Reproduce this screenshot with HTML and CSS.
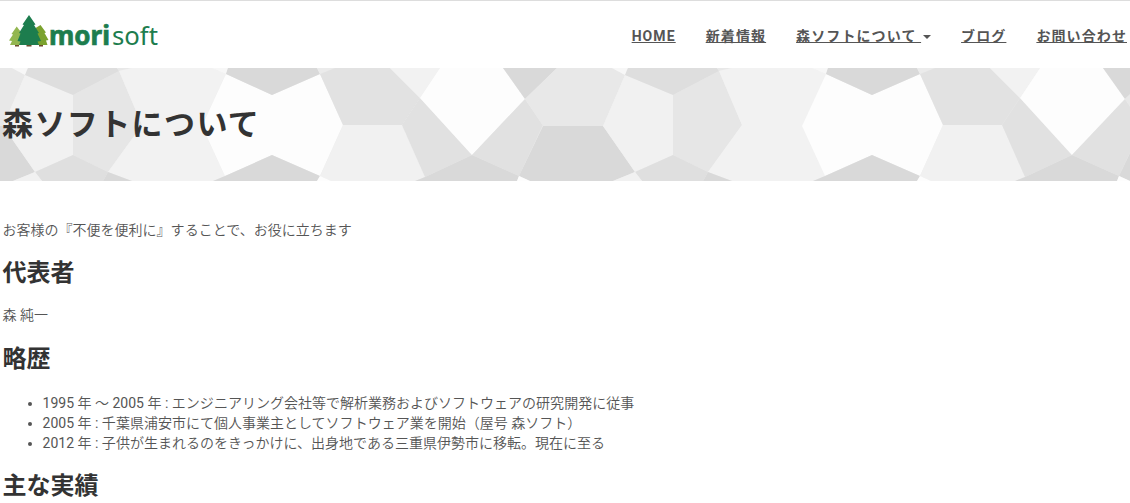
FILE: index.html
```html
<!DOCTYPE html>
<html lang="ja">
<head>
    <meta charset="UTF-8">
    <meta name="viewport" content="width=device-width, initial-scale=1.0">
    <title>森ソフトについて</title>
    <link rel="stylesheet" href="styles.css">
</head>
<body>
    <header class="header">
        <a href="#" class="logo">
            <svg width="156" height="46" viewBox="0 0 156 46" role="img" aria-label="morisoft">
                <path fill="#6b4a2b" d="M7 31h4v2.500H7zM18.500 31h5v2.500h-5zM31 31h4v2.500h-4z"/>
                <path fill="#93b650" d="M8.700 13.500L14 20.500 13 21 18 27V32H2L4 28 1 27.500 5 21.500 3.500 21z"/>
                <path fill="#7ba22e" d="M32.500 12L38 19.500 36.500 20 40.500 27 38 27.500 39.500 32H26V16z"/>
                <path fill="#1d7d4e" d="M21 2L27.500 11.500 26 12 31 20 29.500 20.500 33 28 29.500 28.500 31 32H11L12.500 28.500 9.500 28 12.500 20.500 11 20 16 12 14.500 11.500z"/>
                <text class="logo-bold" x="41" y="32" textLength="61" lengthAdjust="spacingAndGlyphs">mori</text>
                <text class="logo-thin" x="104" y="32" textLength="46" lengthAdjust="spacingAndGlyphs">soft</text>
            </svg>
        </a>
        <nav class="menu">
            <a href="#">HOME</a>
            <a href="#">新着情報</a>
            <a href="#">森ソフトについて <span class="caret"></span></a>
            <a href="#">ブログ</a>
            <a href="#">お問い合わせ</a>
        </nav>
    </header>

    <div class="banner">
        <svg class="banner-bg" width="1130" height="113" viewBox="0 0 1130 113" aria-hidden="true">
            <defs>
                <g id="tile">
                    <path fill="#f1f1f1" d="M3 58L25 7 73 27V87L35 104z"/>
                    <path fill="#e6e6e6" d="M73 27L119 3 142 57 108 104 73 87z"/>
                    <path fill="#dedede" d="M28 0L25 7 73 27 119 3 117 0z"/>
                    <path fill="#e8e8e8" d="M117 0L119 3 132 0z"/>
                    <path fill="#f2f2f2" d="M119 3L132 0H212L226 6 202 58 225 108 213 113H132L108 104 142 57z"/>
                    <path fill="#f7f7f7" d="M212 0H228L226 6z"/>
                    <path fill="#fdfdfd" d="M226 6L272 27 320 6 343 57 320 108 272 87 225 108 202 58z"/>
                    <path fill="#d9d9d9" d="M228 0L226 6 272 27 320 6 317 0z"/>
                    <path fill="#d9d9d9" d="M213 113L225 108 272 87 320 108 317 113z"/>
                    <path fill="#ebebeb" d="M317 0L320 6 335 0z"/>
                    <path fill="#e2e2e2" d="M320 6L335 0H390L420 30 402 57H343z"/>
                    <path fill="#f1f1f1" d="M343 57H402L425 109 415 113H331L320 108z"/>
                    <path fill="#e1e1e1" d="M402 57L420 30 472 87 425 109z"/>
                    <path fill="#f2f2f2" d="M390 0H440L420 30z"/>
                    <path fill="#fdfdfd" d="M440 0H503L525 31 472 87 420 30z"/>
                    <path fill="#d9d9d9" d="M503 0H557L525 31z"/>
                    <path fill="#e1e1e1" d="M525 31L543 57 519 108 472 87z"/>
                    <path fill="#e8e8e8" d="M525 31L557 0H612L625 7 603 58H543z"/>
                    <path fill="#f7f7f7" d="M612 0H628L625 7z"/>
                    <path fill="#d9d9d9" d="M543 58H603L635 104 613 113H530L519 108z"/>
                    <path fill="#d9d9d9" d="M415 113L425 109 472 87 519 108 517 113z"/>
                    <path fill="#fdfdfd" d="M317 113L320 108 331 113zM517 113L519 108 530 113z"/>
                    <path fill="#dfdfdf" d="M42 113L35 104 73 87 108 104 103 113z"/>
                    <path fill="#f1f1f1" d="M13 113L35 104 42 113z"/>
                    <path fill="#d9d9d9" d="M103 113L108 104 132 113z"/>
                </g>
            </defs>
            <use href="#tile" x="-600"/>
            <use href="#tile"/>
            <use href="#tile" x="600"/>
        </svg>
        <h1>森ソフトについて</h1>
    </div>

    <main class="content">
        <p>お客様の『不便を便利に』することで、お役に立ちます</p>
        <h2>代表者</h2>
        <p>森 純一</p>
        <h2>略歴</h2>
        <ul>
            <li>1995 年 〜 2005 年 : エンジニアリング会社等で解析業務およびソフトウェアの研究開発に従事</li>
            <li>2005 年 : 千葉県浦安市にて個人事業主としてソフトウェア業を開始（屋号 森ソフト）</li>
            <li>2012 年 : 子供が生まれるのをきっかけに、出身地である三重県伊勢市に移転。現在に至る</li>
        </ul>
        <h2>主な実績</h2>
    </main>
</body>
</html>
```
FILE: styles.css
```css
* {
    box-sizing: border-box;
}
body {
    margin: 0;
    font-family: Roboto, "Noto Sans CJK JP", sans-serif;
    font-size: 14px;
    line-height: 20px;
    color: #555;
    background: #fff;
    overflow: hidden;
}
.header {
    display: flex;
    justify-content: space-between;
    align-items: flex-start;
    height: 68px;
    padding: 0 2px 0 8px;
    border-top: 1px solid #ddd;
}
.logo {
    padding-top: 12px;
}
.logo svg {
    display: block;
}
.logo text {
    font-family: "Noto Sans", sans-serif;
    font-size: 26px;
    fill: #1d7d4e;
}
.logo .logo-bold {
    font-weight: 700;
    stroke: #1d7d4e;
    stroke-width: 0.7px;
}
.logo .logo-thin {
    font-weight: 400;
}
.menu {
    display: flex;
    gap: 30px;
    padding: 25px 1px 0 0;
}
.menu a {
    color: #555;
    font-weight: 700;
    letter-spacing: 1.1px;
    white-space: nowrap;
    text-decoration: underline;
}
.caret {
    display: inline-block;
    margin-left: 2px;
    vertical-align: middle;
    border-top: 4px solid #555;
    border-left: 4px solid transparent;
    border-right: 4px solid transparent;
}
.banner {
    display: flex;
    position: relative;
    height: 113px;
    overflow: hidden;
    background: #eee;
}
.banner-bg {
    position: absolute;
    top: 0;
    left: 0;
}
.banner h1 {
    position: relative;
    margin: 0;
    padding: 39px 0 0 2px;
    font-size: 31px;
    line-height: 36px;
    letter-spacing: 1.4px;
    font-weight: 700;
    color: #333;
}
.content {
    padding: 39px 2.5px 0;
}
.content p,
.content ul {
    font-family: Roboto, "Noto Sans CJK JP DemiLight", "Noto Sans CJK JP", sans-serif;
    letter-spacing: 0.01px;
}
.content p {
    margin: 0 0 10px;
}
.content h2 {
    margin: 20px 0 18px;
    font-size: 24px;
    line-height: 27px;
    font-weight: 700;
    color: #333;
}
.content p + h2 {
    margin-top: 21px;
}
.content h2:first-of-type {
    margin-top: 20px;
}
.content ul {
    margin: 0;
    padding: 2px 0 0 40px;
}
```
